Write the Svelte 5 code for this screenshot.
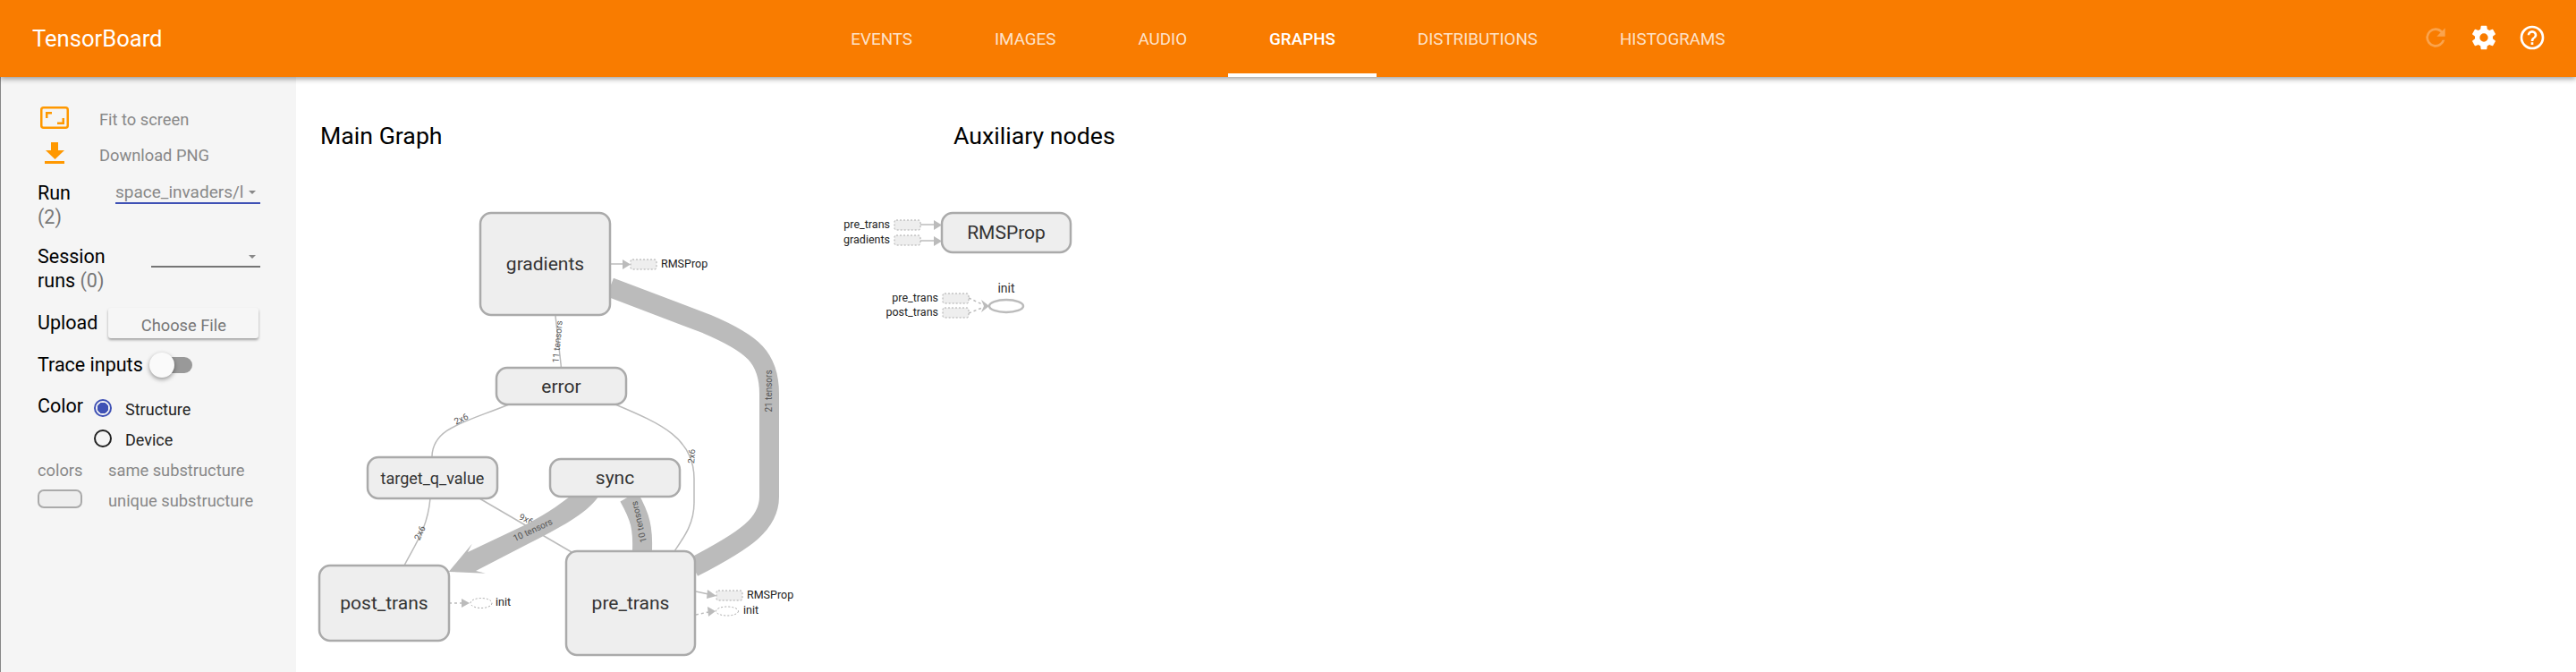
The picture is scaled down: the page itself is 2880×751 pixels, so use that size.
<script>
	const tabs = ['Events', 'Images', 'Audio', 'Graphs', 'Distributions', 'Histograms'];
	let activeTab = 'Graphs';

	// page coordinates, the svg viewBox starts at the sidebar edge
	const nodes = [
		{ label: 'gradients', x: 537, y: 238, w: 145, h: 114 },
		{ label: 'error', x: 555, y: 411, w: 145, h: 41 },
		{ label: 'target_q_value', x: 411, y: 511, w: 145, h: 46, small: true },
		{ label: 'sync', x: 615, y: 513, w: 145, h: 42 },
		{ label: 'post_trans', x: 357, y: 632, w: 145, h: 84 },
		{ label: 'pre_trans', x: 633, y: 616, w: 144, h: 116 },
		{ label: 'RMSProp', x: 1053, y: 238, w: 144, h: 44 }
	];

	const thinEdges = [
		'M621 353 L627.5 411',
		'M569 452 C520 472 483 478 483 511',
		'M688 452 C740 474 776 490 776 535 L776 562 C776 585 765 600 754 616',
		'M481 557 C478 590 465 607 452 632',
		'M536 557 L639 617'
	];

	const edgeLabels = [
		{ text: '11 tensors', x: 624, y: 382, r: -85 },
		{ text: '2x6', x: 516, y: 469, r: -25 },
		{ text: '2x6', x: 774, y: 510, r: -85 },
		{ text: '2x6', x: 470, y: 596, r: -65 },
		{ text: '9x6', x: 588, y: 581, r: 25 }
	];

	const bandLabels = [
		{ text: '21 tensors', x: 860, y: 437, r: -90 },
		{ text: '10 tensors', x: 596, y: 593, r: -25 },
		{ text: '10 tensors', x: 715, y: 583, r: -103 }
	];

	// small stand-ins for the extracted nodes
	const stubs = [
		{ x: 705, y: 290 },
		{ x: 801, y: 660 },
		{ x: 1000, y: 246 },
		{ x: 1000, y: 263 },
		{ x: 1054, y: 328 },
		{ x: 1054, y: 344 }
	];

	const stubLabels = [
		{ text: 'RMSProp', x: 739, y: 296, end: false },
		{ text: 'init', x: 554, y: 674, end: false },
		{ text: 'RMSProp', x: 835, y: 666, end: false },
		{ text: 'init', x: 831, y: 683, end: false },
		{ text: 'pre_trans', x: 995, y: 252, end: true },
		{ text: 'gradients', x: 995, y: 269, end: true },
		{ text: 'pre_trans', x: 1049, y: 334, end: true },
		{ text: 'post_trans', x: 1049, y: 350, end: true }
	];
</script>

<header class="toolbar">
	<div class="title">TensorBoard</div>
	<nav class="tabs">
		{#each tabs as tab}
			<button class="tab" class:active={tab === activeTab} type="button" onclick={() => (activeTab = tab)}>{tab}</button>
		{/each}
	</nav>
	<div class="actions">
		<svg class="action reload" viewBox="0 0 24 24" aria-hidden="true">
			<path d="M17.65 6.35A7.96 7.96 0 0 0 12 4a8 8 0 1 0 7.73 10h-2.08A6 6 0 1 1 12 6c1.66 0 3.14.69 4.22 1.78L13 11h7V4l-2.35 2.35z" />
		</svg>
		<svg class="action" viewBox="0 0 24 24" aria-hidden="true">
			<path d="M19.43 12.98c.04-.32.07-.64.07-.98s-.03-.66-.07-.98l2.11-1.65c.19-.15.24-.42.12-.64l-2-3.46c-.12-.22-.39-.3-.61-.22l-2.49 1c-.52-.4-1.08-.73-1.69-.98l-.38-2.65A.49.49 0 0 0 14 2h-4c-.25 0-.46.18-.49.42l-.38 2.65c-.61.25-1.17.59-1.69.98l-2.49-1a.5.5 0 0 0-.61.22l-2 3.46c-.13.22-.07.49.12.64l2.11 1.65c-.04.32-.07.65-.07.98s.03.66.07.98l-2.11 1.65c-.19.15-.24.42-.12.64l2 3.46c.12.22.39.3.61.22l2.49-1c.52.4 1.08.73 1.69.98l.38 2.65c.03.24.24.42.49.42h4c.25 0 .46-.18.49-.42l.38-2.65c.61-.25 1.17-.59 1.69-.98l2.49 1c.23.09.49 0 .61-.22l2-3.46c.12-.22.07-.49-.12-.64l-2.11-1.65zM12 15.5a3.5 3.5 0 1 1 0-7 3.5 3.5 0 0 1 0 7z" />
		</svg>
		<svg class="action" viewBox="0 0 24 24" aria-hidden="true">
			<path d="M11 18h2v-2h-2v2zm1-16a10 10 0 1 0 0 20 10 10 0 0 0 0-20zm0 18a8 8 0 1 1 0-16 8 8 0 0 1 0 16zm0-14a4 4 0 0 0-4 4h2a2 2 0 1 1 4 0c0 2-3 1.75-3 5h2c0-2.25 3-2.5 3-5a4 4 0 0 0-4-4z" />
		</svg>
	</div>
</header>

<div class="page">
	<aside class="sidebar">
		<div class="command">
			<svg class="cmd-icon" viewBox="0 0 36 28" aria-hidden="true">
				<rect x="4.25" y="2.25" width="29.5" height="22.5" rx="2.5" class="frame" />
				<path d="M9 14V7h7v2.500h-4.500V14zM30 14v7h-8v-2.500h5.500V14z" />
			</svg>
			<span>Fit to screen</span>
		</div>
		<div class="command">
			<svg class="cmd-icon" viewBox="0 0 36 28" aria-hidden="true">
				<path d="M15 1h8v9h7L19.500 20 9 10h6zM8 22h22v3H8z" />
			</svg>
			<span>Download PNG</span>
		</div>

		<div class="control run">
			<div class="label">Run<span class="count">(2)</span></div>
			<div class="select active-select">
				<span class="value">space_invaders/l</span>
				<i class="caret"></i>
			</div>
		</div>

		<div class="control session">
			<div class="label session-label">Session runs <span class="inline-count">(0)</span></div>
			<div class="select empty">
				<i class="caret"></i>
			</div>
		</div>

		<div class="control upload">
			<div class="label">Upload</div>
			<button class="file" type="button">Choose File</button>
		</div>

		<div class="control trace">
			<div class="label">Trace inputs</div>
			<div class="toggle"><i class="thumb"></i></div>
		</div>

		<div class="control color">
			<div class="label">Color</div>
			<div class="radios">
				<div class="radio on"><i></i>Structure</div>
				<div class="radio"><i></i>Device</div>
			</div>
		</div>

		<div class="legend">
			<span class="colors">colors</span><span>same substructure</span>
			<i class="swatch"></i><span>unique substructure</span>
		</div>
	</aside>

	<main class="canvas">
		<svg class="graph" viewBox="331 94 2549 657" width="2549" height="657">
			<text x="358" y="161" class="heading">Main Graph</text>
			<text x="1066" y="161" class="heading">Auxiliary nodes</text>

			{#each thinEdges as d}
				<path {d} class="thin" />
			{/each}
			{#each edgeLabels as l}
				<text class="edge-label" text-anchor="middle" dominant-baseline="middle" transform="translate({l.x} {l.y}) rotate({l.r})">{l.text}</text>
			{/each}

			<path d="M682 321 L790 362 C842 384 860 400 860 440 L860 555 C860 585 835 603 775 634" class="band" />
			<path d="M703 555 C716 578 719 590 718 617" class="band" />
			<path d="M637 555 C615 572 595 583 580 590 L523 617 L527.700 607.700 L501.700 639 L543 640.700 L532 638 L590 608 C625 590 655 575 669 555 Z" class="arrow" />

			{#each bandLabels as l}
				<text class="edge-label" text-anchor="middle" dominant-baseline="middle" transform="translate({l.x} {l.y}) rotate({l.r})">{l.text}</text>
			{/each}

			<!-- links to extracted nodes -->
			<path d="M682 295H697" class="thin" />
			<polygon points="696,290 705,295.500 696,301" class="arrow" />
			<path d="M778 661L792 664" class="thin" />
			<polygon points="791,659 801,666 790,669" class="arrow" />
			<path d="M1029 251H1045" class="thin" />
			<polygon points="1044,246 1053,251.500 1044,257" class="arrow" />
			<path d="M1029 269H1045" class="thin" />
			<polygon points="1044,264 1053,269.500 1044,275" class="arrow" />
			<path d="M502 674H517" class="dotted" />
			<polygon points="516,669 525,674 516,679" class="arrow" />
			<path d="M778 687L792 684" class="dotted" />
			<polygon points="791,678 800,683 792,689" class="arrow" />
			<path d="M1083 333L1098 340M1083 350L1098 344" class="dotted" />
			<polygon points="1097,335 1106,342 1097,349 1100,342" class="arrow" />

			{#each stubs as s}
				<rect x={s.x} y={s.y} width="29" height="11" rx="2" class="stub" />
			{/each}
			<ellipse cx="538" cy="674" rx="12" ry="5.500" class="stub-ellipse" />
			<ellipse cx="813" cy="683" rx="12.500" ry="5" class="stub-ellipse" />

			{#each stubLabels as l}
				<text x={l.x} y={l.y} class="stub-label" text-anchor={l.end ? 'end' : 'start'} dominant-baseline="middle">{l.text}</text>
			{/each}

			{#each nodes as n}
				<rect x={n.x} y={n.y} width={n.w} height={n.h} rx="12" class="node" />
				<text x={n.x + n.w / 2} y={n.y + n.h / 2} class="node-label" class:small={n.small} text-anchor="middle" dominant-baseline="central">{n.label}</text>
			{/each}

			<ellipse cx="1125" cy="342" rx="19" ry="7" class="op" />
			<text x="1125" y="323" class="op-label" text-anchor="middle" dominant-baseline="middle">init</text>
		</svg>
	</main>
</div>

<style>
	:global(body) {
		margin: 0;
		background: #fff;
		font-family: Roboto, 'Noto Sans', sans-serif;
	}

	.toolbar {
		position: relative;
		z-index: 2;
		display: grid;
		grid-template-columns: 1fr auto 1fr;
		align-items: stretch;
		height: 86px;
		background: #f97c00;
		color: #fff;
		box-shadow: 0 2px 6px rgba(0, 0, 0, 0.4);
	}

	.title {
		align-self: center;
		padding-left: 36px;
		font-size: 25.6px;
	}

	.tabs {
		display: flex;
	}

	.tab {
		padding: 5px 46px 0;
		border: 0;
		border-bottom: 4px solid transparent;
		background: none;
		color: rgba(255, 255, 255, 0.8);
		font: 400 18.8px Roboto, sans-serif;
		text-transform: uppercase;
		cursor: pointer;
	}

	.tab.active {
		border-bottom-color: #fff;
		color: #fff;
		font-weight: 500;
	}

	.actions {
		display: flex;
		align-items: center;
		justify-content: flex-end;
		gap: 22px;
		padding: 0 33px 2px 0;
	}

	.action {
		width: 32px;
		height: 32px;
		fill: #fff;
	}

	.action.reload {
		opacity: 0.3;
	}

	.page {
		display: flex;
		height: 665px;
	}

	.sidebar {
		flex: none;
		box-sizing: border-box;
		width: 331px;
		padding: 27px 40px 0 41px;
		border-left: 1px solid #888;
		background: #f5f5f5;
		font-size: 21.5px;
	}

	.command {
		display: flex;
		align-items: center;
		height: 40px;
		color: #888;
		font-size: 18.3px;
	}

	.cmd-icon {
		flex: none;
		width: 36px;
		height: 28px;
		margin: -3px 33px 0 0;
		fill: #ff9800;
	}

	.cmd-icon .frame {
		fill: none;
		stroke: #ff9800;
		stroke-width: 2.500;
	}

	.control {
		display: flex;
	}

	.label {
		color: #000;
		line-height: 25px;
	}

	.count {
		display: block;
		margin-top: 2px;
		color: #777;
	}

	.inline-count {
		color: #777;
	}

	.run {
		justify-content: space-between;
		height: 70px;
		margin-top: 10px;
	}

	.select {
		position: relative;
		box-sizing: border-box;
		border-bottom: 2px solid #757575;
	}

	.active-select {
		width: 162px;
		height: 27px;
		margin-top: -2px;
		border-bottom-color: #3f51b5;
		color: #888;
	}

	.value {
		display: block;
		width: 144px;
		overflow: hidden;
		white-space: nowrap;
		font-size: 19px;
		line-height: 28px;
	}

	.caret {
		position: absolute;
		right: 5px;
		top: 12px;
		border: 4px solid transparent;
		border-top-color: #888;
	}

	.session {
		justify-content: space-between;
		height: 67px;
	}

	.session-label {
		width: 100px;
		line-height: 27px;
	}

	.empty {
		width: 122px;
		height: 26px;
	}

	.upload {
		align-items: center;
		gap: 12px;
		height: 40px;
	}

	.file {
		width: 168px;
		height: 34px;
		margin-top: 1px;
		padding: 5px 0 0;
		border: 0;
		border-radius: 3px;
		background: #f6f6f6;
		box-shadow: 0 2px 3px rgba(0, 0, 0, 0.35);
		color: #777;
		font: 18.3px Roboto, sans-serif;
	}

	.trace {
		align-items: center;
		gap: 7px;
		margin-top: 15px;
	}

	.toggle {
		position: relative;
		width: 48px;
		height: 18px;
	}

	.toggle::before {
		content: '';
		position: absolute;
		left: 16px;
		top: 0;
		width: 32px;
		height: 18px;
		border-radius: 9px;
		background: #999;
	}

	.thumb {
		position: absolute;
		left: 0;
		top: -5px;
		width: 28px;
		height: 28px;
		border-radius: 50%;
		background: #fafafa;
		box-shadow: 0 2px 5px rgba(0, 0, 0, 0.4);
	}

	.color {
		gap: 12px;
		margin-top: 21px;
	}

	.radios {
		margin-top: -1px;
		color: #222;
		font-size: 18px;
	}

	.radio {
		display: flex;
		align-items: center;
		gap: 15px;
		height: 34px;
	}

	.radio i {
		box-sizing: border-box;
		width: 20px;
		height: 20px;
		margin-top: -3px;
		border: 2px solid #222;
		border-radius: 50%;
	}

	.radio.on i {
		border-color: #3f51b5;
		background: radial-gradient(circle, #3f51b5 0 6px, transparent 6.500px);
	}

	.legend {
		display: grid;
		grid-template-columns: 50px auto;
		column-gap: 29px;
		align-items: center;
		grid-auto-rows: 34px;
		color: #888;
		font-size: 18.3px;
	}

	.swatch {
		box-sizing: border-box;
		height: 21px;
		margin-top: -3px;
		border: 2px solid #aaa;
		border-radius: 7px;
		background: #eee;
	}

	.canvas {
		flex: 1;
		overflow: hidden;
	}

	.graph {
		display: block;
		margin-top: 8px;
	}

	.heading {
		font-size: 26.7px;
		fill: #000;
	}

	.node {
		fill: #eee;
		stroke: #aaa;
		stroke-width: 2.500;
	}

	.node-label {
		font-size: 21px;
		fill: #333;
	}

	.node-label.small {
		font-size: 18px;
	}

	.thin {
		fill: none;
		stroke: #bbb;
		stroke-width: 1.500;
	}

	.dotted {
		fill: none;
		stroke: #bbb;
		stroke-width: 1.500;
		stroke-dasharray: 3 3;
	}

	.band {
		fill: none;
		stroke: #bbb;
		stroke-width: 22;
	}

	.arrow {
		fill: #bbb;
	}

	.edge-label {
		font-size: 10px;
		fill: #555;
	}

	.stub {
		fill: #eee;
		stroke: #aaa;
		stroke-dasharray: 2 2;
	}

	.stub-ellipse {
		fill: #fff;
		stroke: #aaa;
		stroke-dasharray: 2 2;
	}

	.stub-label {
		font-size: 12.500px;
		fill: #222;
	}

	.op {
		fill: #fff;
		stroke: #bbb;
		stroke-width: 2.500;
	}

	.op-label {
		font-size: 14px;
		fill: #333;
	}
</style>
